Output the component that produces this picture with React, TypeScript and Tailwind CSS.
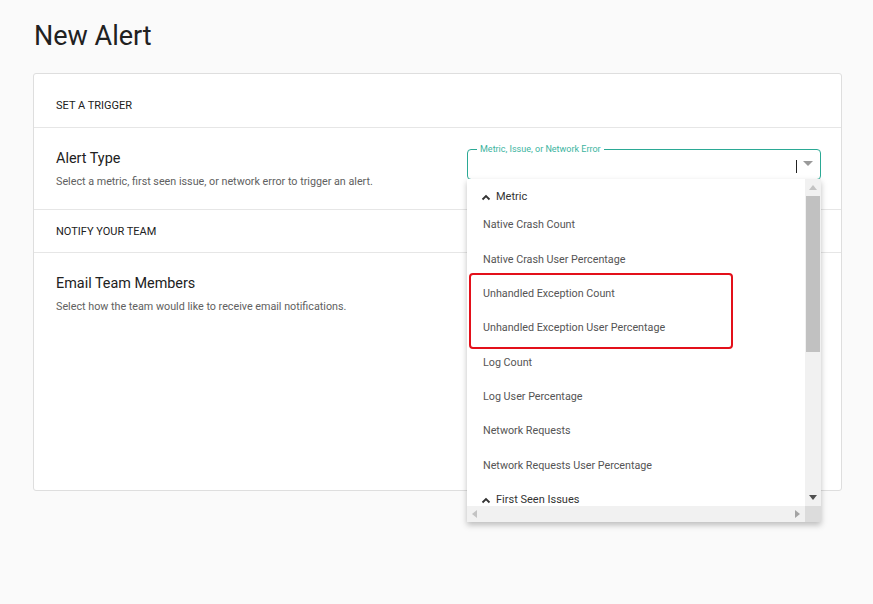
const metricItems = [
  "Native Crash Count",
  "Native Crash User Percentage",
  "Unhandled Exception Count",
  "Unhandled Exception User Percentage",
  "Log Count",
  "Log User Percentage",
  "Network Requests",
  "Network Requests User Percentage",
];

function ChevronUp() {
  return (
    <svg width="10" height="8" viewBox="0 0 10 8" className="shrink-0">
      <path d="M1.5 6.5 L5 3 L8.5 6.5" fill="none" stroke="#333" strokeWidth="1.8" />
    </svg>
  );
}

function GroupHeader({ label, top = "pt-[7px]" }: { label: string; top?: string }) {
  return (
    <div className={`h-[29px] ${top} pl-[14px] flex items-center gap-[5px] text-[11px] text-[#333]`}>
      <ChevronUp />
      <span>{label}</span>
    </div>
  );
}

function Dropdown() {
  return (
    <div className="absolute top-full -left-px w-[354px] h-[343px] bg-white z-10 shadow-[0_3px_6px_rgba(0,0,0,0.25)] flex flex-col">
      <div className="flex flex-1 min-h-0">
        <div className="relative flex-1 overflow-hidden">
          <GroupHeader label="Metric" />
          {metricItems.map((item) => (
            <div
              key={item}
              className="h-[34.4px] flex items-center pl-[16px] text-[10.75px] text-[#555] whitespace-nowrap"
            >
              {item}
            </div>
          ))}
          <GroupHeader label="First Seen Issues" top="pt-[5px]" />
          {/* highlight box */}
          <div className="absolute left-[2px] top-[94px] w-[264px] h-[76px] border-[2.5px] border-[#e3101a] rounded-[4px]" />
        </div>
        {/* vertical scrollbar */}
        <div className="w-[16px] bg-[#f1f1f1] flex flex-col items-center">
          <div className="h-[17px] flex items-center justify-center">
            <svg width="8" height="5" viewBox="0 0 8 5">
              <path d="M0 5 L4 0 L8 5 Z" fill="#c3c3c3" />
            </svg>
          </div>
          <div className="w-[14px] h-[156px] bg-[#c1c1c1]" />
          <div className="flex-1" />
          <div className="h-[17px] flex items-center justify-center">
            <svg width="8" height="5" viewBox="0 0 8 5">
              <path d="M0 0 L8 0 L4 5 Z" fill="#505050" />
            </svg>
          </div>
        </div>
      </div>
      {/* horizontal scrollbar */}
      <div className="h-[16px] flex">
        <div className="flex-1 bg-[#f1f1f1] flex items-center justify-between px-[5px]">
          <svg width="5" height="8" viewBox="0 0 5 8">
            <path d="M5 0 L0 4 L5 8 Z" fill="#c3c3c3" />
          </svg>
          <svg width="5" height="8" viewBox="0 0 5 8">
            <path d="M0 0 L5 4 L0 8 Z" fill="#a3a3a3" />
          </svg>
        </div>
        <div className="w-[16px] bg-[#dcdcdc]" />
      </div>
    </div>
  );
}

function AlertTypeField() {
  return (
    <div className="relative w-[354px] h-[31px] border border-[#2ba995] rounded-[4px] bg-white">
      <span className="absolute -top-[7px] left-[9px] px-[3px] bg-white text-[9px] leading-[12px] text-[#3cb4a0]">
        Metric, Issue, or Network Error
      </span>
      <div className="absolute left-[328px] top-[10px] w-px h-[13px] bg-[#222]" />
      <svg
        width="10"
        height="6"
        viewBox="0 0 10 6"
        className="absolute right-[7px] top-[11px]"
      >
        <path d="M0 0 L10 0 L5 5 Z" fill="#9a9a9a" />
      </svg>
      <Dropdown />
    </div>
  );
}

export default function App() {
  return (
    <div
      className="min-h-[604px] w-full bg-[#fafafa] pt-[21px] pl-[33px] pr-[31px]"
      style={{ fontFamily: "Roboto, 'Liberation Sans', sans-serif" }}
    >
      <h1 className="text-[27px] leading-[30px] text-[#212121] pl-px">New Alert</h1>

      <div className="mt-[22px] h-[418px] bg-white border border-[#dedede] rounded-[3px] flex flex-col">
        {/* Set a trigger */}
        <div className="pt-[25px] pb-[14px] px-[22px] border-b border-[#e6e6e6]">
          <h2 className="text-[11px] leading-[14px] text-[#212121] uppercase">Set a trigger</h2>
        </div>

        <div className="pt-[21px] pb-[20px] pl-[22px] pr-[20px] border-b border-[#e6e6e6] flex justify-between">
          <div className="pt-px">
            <h3 className="text-[14.4px] leading-[18px] text-[#212121]">Alert Type</h3>
            <p className="mt-[7px] text-[10.75px] leading-[14px] text-[#616161]">
              Select a metric, first seen issue, or network error to trigger an alert.
            </p>
          </div>
          <AlertTypeField />
        </div>

        {/* Notify your team */}
        <div className="pt-[15px] pb-[13px] px-[22px] border-b border-[#e6e6e6]">
          <h2 className="text-[11px] leading-[14px] text-[#212121] uppercase">Notify your team</h2>
        </div>

        <div className="flex-1 pt-[22px] px-[22px]">
          <h3 className="text-[14.4px] leading-[18px] text-[#212121]">Email Team Members</h3>
          <p className="mt-[7px] text-[10.75px] leading-[14px] text-[#616161]">
            Select how the team would like to receive email notifications.
          </p>
        </div>
      </div>
    </div>
  );
}
